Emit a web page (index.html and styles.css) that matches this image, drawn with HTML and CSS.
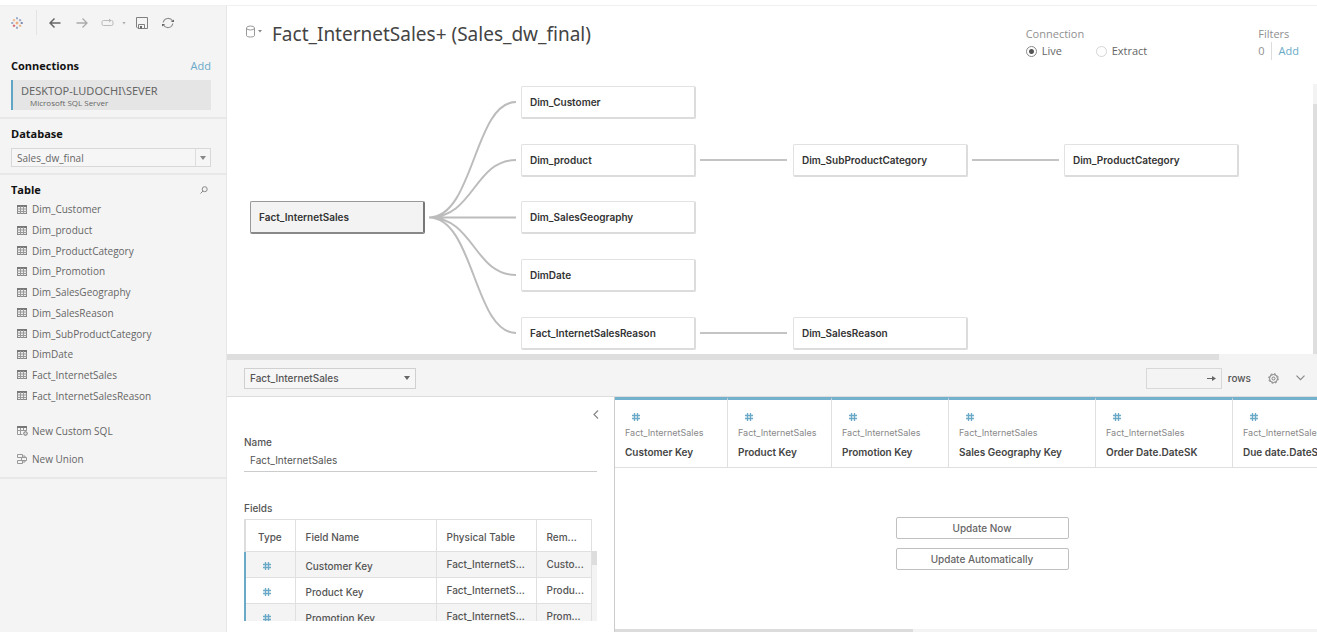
FILE: index.html
```html
<!DOCTYPE html>
<html lang="en">
<head>
<meta charset="utf-8">
<title>Data Source - Sales_dw_final</title>
<link rel="stylesheet" href="styles.css">
</head>
<body>
<svg class="defs" aria-hidden="true">
  <symbol id="i-table" viewBox="0 0 10 9"><rect x="0.5" y="0.5" width="9" height="8" fill="#ececec" stroke="#888"/><path d="M0 1h10" stroke="#777" stroke-width="2"/><path d="M3.5 1v8M6.5 1v8M0 4h10M0 6.500h10" stroke="#999"/></symbol>
  <symbol id="i-hash" viewBox="0 0 10 10"><path d="M3.500 1v8M6.500 1v8M1 3.500h8M1 6.500h8" stroke="#6aaac8" stroke-width="1.300" fill="none"/></symbol>
</svg>
<div class="app">
  <aside class="sidebar">
    <div class="toolbar">
      <button class="tool logo" aria-label="Start page"><svg width="14" height="14" viewBox="0 0 14 14" fill="none"><path d="M7 5.500v3M5.500 7h3" stroke="#e8935a"/><path d="M7 1v2.500M6 2.200h2" stroke="#8aa0c0"/><path d="M7 10.500V13M6 11.800h2" stroke="#8a9ac0"/><path d="M2.200 6v2M1 7h2.500" stroke="#8aa0c8"/><path d="M11.800 6v2M10.500 7H13" stroke="#6d7aa8"/><path d="M4 3v2.500M2.800 4.200h2.500" stroke="#eeb080"/><path d="M10 3v2.500M8.800 4.200h2.500" stroke="#8d9cc4"/><path d="M4 8.500V11M2.800 9.800h2.500" stroke="#d4555c"/><path d="M10 8.500V11M8.800 9.800h2.500" stroke="#e6b07c"/></svg></button>
      <button class="tool back" aria-label="Back"><svg width="12" height="12" viewBox="0 0 12 12" fill="none" stroke="#666" stroke-width="1.500"><path d="M11.500 6H1M5.500 1.500L1 6l4.500 4.500"/></svg></button>
      <button class="tool forward" aria-label="Forward"><svg width="12" height="12" viewBox="0 0 12 12" fill="none" stroke="#aaa" stroke-width="1.300"><path d="M.5 6H11M6.500 1.500L11 6l-4.500 4.500"/></svg></button>
      <button class="tool redo" aria-label="Replay"><svg width="25" height="12" viewBox="0 0 25 12" fill="none" stroke="#bbb"><path d="M8 3.500H2.500a1.500 1.500 0 0 0-1.500 1.500v2a1.500 1.500 0 0 0 1.500 1.500h8a1.500 1.500 0 0 0 1.500-1.500V5q0-1.500-1.500-1.500"/><path d="M8 1.500v4l2.500-2z" fill="#bbb" stroke="none"/><path d="M21.500 5h3L23 7.500z" fill="#aaa" stroke="none"/></svg></button>
      <button class="tool save" aria-label="Save"><svg width="12" height="12" viewBox="0 0 12 12" fill="none" stroke="#808080"><path d="M.5.5h11v11H2L.5 10z"/><path d="M2.500 11V7.500h6V11"/><path d="M4 9h2v2.500H4z" fill="#666" stroke="none"/></svg></button>
      <button class="tool refresh" aria-label="Refresh"><svg width="12" height="12" viewBox="0 0 12 12" fill="none" stroke="#909090" stroke-width="1.200"><path d="M1.200 5.500A5 5 0 0 1 10.500 4M10.800 6.500A5 5 0 0 1 1.500 8"/><path d="M8.800 5h3.200V2.500zM3.200 7H0v2.500z" fill="#666" stroke="none"/></svg></button>
    </div>
    <section class="connections">
      <div class="heading"><h2>Connections</h2><a href="#">Add</a></div>
      <div class="connection"><div>DESKTOP-LUDOCHI\SEVER</div><small>Microsoft SQL Server</small></div>
    </section>
    <section class="database">
      <h2><label for="db">Database</label></h2>
      <div class="picker"><select id="db"><option>Sales_dw_final</option></select><span class="caret"></span></div>
    </section>
    <section class="tables">
      <div class="heading"><h2>Table</h2><button class="search" aria-label="Search"><svg width="8" height="8" viewBox="0 0 8 8" fill="none" stroke="#888"><circle cx="4.700" cy="3.200" r="2.500"/><path d="M3 5L.5 7.500"/></svg></button></div>
      <ul class="table-list">
        <li><svg class="ti"><use href="#i-table"/></svg>Dim_Customer</li>
        <li><svg class="ti"><use href="#i-table"/></svg>Dim_product</li>
        <li><svg class="ti"><use href="#i-table"/></svg>Dim_ProductCategory</li>
        <li><svg class="ti"><use href="#i-table"/></svg>Dim_Promotion</li>
        <li><svg class="ti"><use href="#i-table"/></svg>Dim_SalesGeography</li>
        <li><svg class="ti"><use href="#i-table"/></svg>Dim_SalesReason</li>
        <li><svg class="ti"><use href="#i-table"/></svg>Dim_SubProductCategory</li>
        <li><svg class="ti"><use href="#i-table"/></svg>DimDate</li>
        <li><svg class="ti"><use href="#i-table"/></svg>Fact_InternetSales</li>
        <li><svg class="ti"><use href="#i-table"/></svg>Fact_InternetSalesReason</li>
      </ul>
      <button class="new"><svg width="11" height="10" viewBox="0 0 11 10" fill="none" stroke="#999"><path d="M.5 8.500v-8h9V5M3.500 2v6.500M6.500 2v3M.5 4.500h9M.5 8.500h5"/><path d="M0 1h10" stroke="#777" stroke-width="2"/><circle cx="8.500" cy="7.500" r="1.800" fill="#ddd" stroke="#777"/></svg>New Custom SQL</button>
      <button class="new"><svg width="11" height="10" viewBox="0 0 11 10" fill="none" stroke="#999"><path d="M.5.5h5v3h-5zM.5 6.500h5v3h-5zM5.500 2H8v1.500M5.500 8H8V6.500M4.500 3.500h5v3h-5z"/></svg>New Union</button>
    </section>
  </aside>
  <main class="main">
    <header class="header">
      <button class="source" aria-label="Data source menu"><svg width="18" height="14" viewBox="0 0 18 14" fill="none" stroke="#999"><ellipse cx="5.500" cy="3" rx="4" ry="2"/><path d="M1.500 3v7.500c0 2 8 2 8 0V3"/><path d="M13 5h4l-2 2.500z" fill="#888" stroke="none"/></svg></button>
      <h1>Fact_InternetSales+ (Sales_dw_final)</h1>
      <fieldset class="mode">
        <legend>Connection</legend>
        <label><input type="radio" name="mode" checked>Live</label>
        <label><input type="radio" name="mode">Extract</label>
      </fieldset>
      <div class="filters"><div>Filters</div><div class="count"><span>0</span><a href="#">Add</a></div></div>
    </header>
    <div class="canvas">
      <svg class="links" width="1090" height="270" fill="none" stroke="#bcbcbc" stroke-width="2"><path d="M202 133.500C247 133.500 247 18 289 18M202 133.500C247 133.500 247 76 289 76M202 133.500H289M202 133.500C247 133.500 247 191 289 191M202 133.500C247 133.500 247 249 289 249"/><path d="M473 76h87M745 76h87M473 249h87" stroke="#c4c4c4"/></svg>
      <div class="node root">Fact_InternetSales</div>
      <div class="node c2 r1">Dim_Customer</div>
      <div class="node c2 r2">Dim_product</div>
      <div class="node c2 r3">Dim_SalesGeography</div>
      <div class="node c2 r4">DimDate</div>
      <div class="node c2 r5">Fact_InternetSalesReason</div>
      <div class="node c3 r2">Dim_SubProductCategory</div>
      <div class="node c3 r5">Dim_SalesReason</div>
      <div class="node c4 r2">Dim_ProductCategory</div>
      <div class="vscroll"></div>
    </div>
    <div class="hscroll"></div>
    <div class="gridbar">
      <div class="picker large"><select aria-label="Table"><option>Fact_InternetSales</option></select><span class="caret"></span></div>
      <label class="rows"><span class="rowbox"><input type="text"><svg width="9" height="7" viewBox="0 0 9 7" fill="none" stroke="#666"><path d="M0 3.500h8"/><path d="M5 1l4 2.500L5 6z" fill="#666" stroke="none"/></svg></span>rows</label>
      <button class="gear" aria-label="Settings"><svg width="11" height="11" viewBox="0 0 11 11" fill="none" stroke="#808080"><circle cx="5.500" cy="5.500" r="4"/><circle cx="5.500" cy="5.500" r="1.500"/><circle cx="5.500" cy="5.500" r="4.800" stroke-dasharray="1.900 1.870"/></svg></button>
      <button aria-label="Collapse grid"><svg width="9" height="6" viewBox="0 0 9 6" fill="none" stroke="#888" stroke-width="1.200"><path d="M.5.7l4 4 4-4"/></svg></button>
    </div>
    <div class="lower">
      <section class="details">
        <button class="collapse" aria-label="Collapse details"><svg width="6" height="9" viewBox="0 0 6 9" fill="none" stroke="#888" stroke-width="1.200"><path d="M5 .5l-4 4 4 4"/></svg></button>
        <label class="caption" for="name">Name</label>
        <input class="name" id="name" type="text" value="Fact_InternetSales">
        <div class="caption fields-title">Fields</div>
        <div class="fields-wrap">
          <table class="fields">
            <colgroup><col class="w-type"><col class="w-name"><col class="w-phys"><col></colgroup>
            <thead><tr><th>Type</th><th>Field Name</th><th>Physical Table</th><th>Rem...</th></tr></thead>
            <tbody>
              <tr><td><svg class="hash"><use href="#i-hash"/></svg></td><td>Customer Key</td><td>Fact_InternetS...</td><td>Custo...</td></tr>
              <tr><td><svg class="hash"><use href="#i-hash"/></svg></td><td>Product Key</td><td>Fact_InternetS...</td><td>Produ...</td></tr>
              <tr><td><svg class="hash"><use href="#i-hash"/></svg></td><td>Promotion Key</td><td>Fact_InternetS...</td><td>Prom...</td></tr>
            </tbody>
          </table>
          <div class="fscroll"></div>
        </div>
      </section>
      <section class="preview">
        <div class="columns">
          <div class="column"><svg class="hash"><use href="#i-hash"/></svg><span>Fact_InternetSales</span><b>Customer Key</b></div>
          <div class="column"><svg class="hash"><use href="#i-hash"/></svg><span>Fact_InternetSales</span><b>Product Key</b></div>
          <div class="column"><svg class="hash"><use href="#i-hash"/></svg><span>Fact_InternetSales</span><b>Promotion Key</b></div>
          <div class="column"><svg class="hash"><use href="#i-hash"/></svg><span>Fact_InternetSales</span><b>Sales Geography Key</b></div>
          <div class="column"><svg class="hash"><use href="#i-hash"/></svg><span>Fact_InternetSales</span><b>Order Date.DateSK</b></div>
          <div class="column"><svg class="hash"><use href="#i-hash"/></svg><span>Fact_InternetSales</span><b>Due date.DateSK</b></div>
        </div>
        <div class="actions"><button>Update Now</button><button>Update Automatically</button></div>
        <div class="pscroll"></div>
      </section>
    </div>
  </main>
</div>
</body>
</html>
```
FILE: styles.css
```css
* { box-sizing: border-box; }
body { margin: 0; font: 10px/14px "Open Sans", "Noto Sans", sans-serif; color: #666; background: #fff; }
h1, h2, ul, fieldset { margin: 0; padding: 0; border: 0; font-weight: 400; }
button, input, select { font: inherit; color: inherit; background: none; border: 0; padding: 0; margin: 0; }
a { color: #6aaac8; text-decoration: none; }
svg { flex: none; display: block; }
.defs { position: absolute; width: 0; height: 0; }
.app { display: flex; height: 100vh; padding-top: 5px; overflow: hidden; }

.sidebar { flex: none; width: 227px; background: #f4f4f4; border-right: 1px solid #e6e6e6; border-top: 1px solid #f0f0f0; }
.toolbar { display: flex; align-items: center; height: 33px; padding-left: 10px; }
.tool { display: flex; flex: none; }
.logo { width: 27px; height: 25px; align-items: center; border-right: 1px solid #e4e4e4; }
.back { margin-left: 12px; }
.forward { margin-left: 15px; }
.redo { margin-left: 13px; }
.save { margin-left: 10px; }
.refresh { margin-left: 14px; }
.sidebar h2 { color: #111; font-size: 11px; font-weight: 700; line-height: 16px; }
.sidebar section { padding: 0 15px 0 11px; border-bottom: 2px solid #e8e8e8; }
.heading { display: flex; justify-content: space-between; align-items: center; }
.heading a { font-size: 11px; }
.connections { height: 80px; }
.sidebar .connections { padding-top: 19px; }
.connection { margin-top: 6px; height: 30px; background: #e5e5e5; border-left: 2px solid #5fa5c4; padding: 4px 0 0 8px; font: 11px/13px "Noto Sans", sans-serif; }
.connection small { display: block; padding-left: 9px; font: 8px/11px "Open Sans", sans-serif; }
.sidebar .database { height: 56px; padding-top: 7px; }
.picker { position: relative; height: 19px; margin-top: 6px; border: 1px solid #d8d8d8; background: #f6f6f6; }
.picker select { appearance: none; width: 100%; height: 100%; padding-left: 5px; display: block; }
.caret { position: absolute; right: 0; top: 0; bottom: 0; width: 15px; border-left: 1px solid #ddd; pointer-events: none; }
.caret::after { content: ""; position: absolute; left: 4px; top: 7px; border: 3px solid transparent; border-top: 4px solid #888; border-bottom: 0; }
.sidebar .tables { padding-top: 7px; padding-bottom: 4px; }
.search { margin-right: 3px; }
.table-list { list-style: none; display: grid; grid-auto-rows: 1fr; height: 207px; margin-top: 1px; }
.table-list li, .new { display: flex; align-items: center; gap: 5px; padding-left: 6px; font-size: 10px; }
.ti { width: 10px; height: 9px; }
.new { height: 28px; gap: 4px; }
.table-list + .new { margin-top: 11px; }

.main { flex: 1; min-width: 0; display: flex; flex-direction: column; border-top: 1px solid #f0f0f0; }
.header { display: flex; align-items: flex-start; height: 78px; flex: none; padding: 16px 18px 0; }
.source { margin-top: 3px; }
.header h1 { margin-left: 9px; font: 19px/25px "Noto Sans", sans-serif; color: #444; flex: 1; }
.mode { display: grid; grid-template-columns: 70px auto; margin-top: 4px; font-size: 11px; line-height: 16px; }
.mode legend { padding: 0; color: #909090; line-height: 16px; }
.mode label { display: flex; align-items: center; gap: 5px; line-height: 18px; }
.mode input { appearance: none; width: 11px; height: 11px; border: 1px solid #d4d4d4; border-radius: 50%; background: #fff; }
.mode input:checked { border-color: #888; background: radial-gradient(circle, #555 0 2px, #fff 3px); }
.filters { margin: 4px 0 0 111px; font-size: 11px; line-height: 16px; color: #909090; }
.count { display: flex; line-height: 18px; }
.count a { margin-left: 6px; padding-left: 7px; border-left: 1px solid #ddd; }
.canvas { position: relative; height: 270px; flex: none; overflow: hidden; }
.links { position: absolute; left: 0; top: 0; }
.node { position: absolute; width: 175px; height: 33px; padding-left: 8px; background: #fff; border: 1px solid #e2e2e2; border-right: 2px solid #dcdcdc; border-bottom: 2px solid #dcdcdc; border-radius: 2px; font: 600 10px/30px Inter, sans-serif; color: #333; }
.root { left: 23px; top: 118px; background: #f3f3f3; border-color: #999 #777 #888 #999; }
.c2 { left: 294px; } .c3 { left: 566px; } .c4 { left: 837px; }
.r1 { top: 2px; } .r2 { top: 60px; } .r3, .root { top: 117px; } .r4 { top: 175px; } .r5 { top: 233px; }
.vscroll { position: absolute; right: 0; top: 0; bottom: 0; width: 4px; background: #f3f3f3; }
.vscroll::after { content: ""; display: block; height: 100%; background: #dedede; border-top: 20px solid #f3f3f3; }
.hscroll { flex: none; height: 6px; background: #f3f3f3; }
.hscroll::after { content: ""; display: block; width: 91%; height: 100%; background: #dedede; }
.gridbar { flex: none; display: flex; align-items: center; height: 37px; padding: 0 12px 0 17px; background: #f4f4f4; border-bottom: 1px solid #ddd; font: 500 10px/14px Inter, sans-serif; color: #555; }
.picker.large { width: 172px; height: 21px; margin: 0; border-color: #d0d0d0; }
.large .caret { border: 0; }
.large .caret::after { border-top-color: #666; }
.rows { display: flex; align-items: center; gap: 6px; margin-left: auto; }
.rowbox { display: flex; align-items: center; width: 76px; height: 21px; padding-right: 5px; border: 1px solid #d8d8d8; }
.rowbox input { flex: 1; min-width: 0; }
.gear { margin: 0 17px; }
.lower { flex: 1; min-height: 0; display: flex; }
.details { flex: none; width: 388px; padding: 13px 17px 0; border-right: 1px solid #ccc; font: 500 10px/14px Inter, sans-serif; color: #555; }
.collapse { display: block; margin-left: 349px; }
.caption { display: block; margin-top: 16px; line-height: 14px; }
.name { display: block; width: 100%; height: 23px; padding-left: 6px; border-bottom: 1px solid #ccc; font-weight: 400; }
.fields-title { margin-top: 29px; }
.fields-wrap { display: flex; height: 102px; margin-top: 4px; overflow: hidden; }
.fields { flex: none; table-layout: fixed; border-collapse: collapse; width: 348px; height: 109px; }
.w-type { width: 50px; } .w-name { width: 141px; } .w-phys { width: 100px; }
.fields th, .fields td { padding: 0 0 0 10px; border: 1px solid #e0e0e0; text-align: left; font-weight: 500; overflow: hidden; white-space: nowrap; }
.fields th { height: 32px; padding-top: 2px; }
.fields th:first-child { padding-left: 12px; border-left: 2px solid #ddd; }
.fields td { height: 26px; padding-top: 2px; }
.fields td:first-child { padding-left: 16px; border-left: 2px solid #6aaac8; }
.fields td:nth-child(n+3) { padding-top: 0; padding-bottom: 2px; }
.fields tr:nth-child(odd) td { background: #f4f4f4; }
.hash { width: 10px; height: 10px; }
.fscroll { flex: none; width: 5px; margin-top: 32px; background: #f3f3f3; }
.fscroll::before { content: ""; display: block; height: 14px; background: #ddd; }
.preview { flex: 1; min-width: 0; display: flex; flex-direction: column; overflow: hidden; font-family: Inter, sans-serif; }
.columns { flex: none; display: grid; grid-template-columns: 113px 104px 117px 147px 137px 137px; height: 71px; border-bottom: 1px solid #e0e0e0; }
.column { border-top: 3px solid #74b1cd; border-right: 1px solid #e0e0e0; padding: 12px 0 0 10px; white-space: nowrap; }
.column .hash { margin-left: 6px; }
.column span { display: block; margin-top: 4px; font-size: 9px; line-height: 13px; color: #888; }
.column b { display: block; margin-top: 6px; font-size: 10px; font-weight: 600; color: #444; }
.actions { flex: 1; display: flex; flex-direction: column; align-items: center; gap: 9px; padding: 49px 0 0 32px; }
.actions button { width: 173px; height: 22px; border: 1px solid #c0c0c0; border-radius: 2px; font-weight: 500; color: #666; }
.pscroll { flex: none; height: 3px; background: #f3f3f3; }
.pscroll::after { content: ""; display: block; width: 298px; height: 100%; background: #dcdcdc; }
```
